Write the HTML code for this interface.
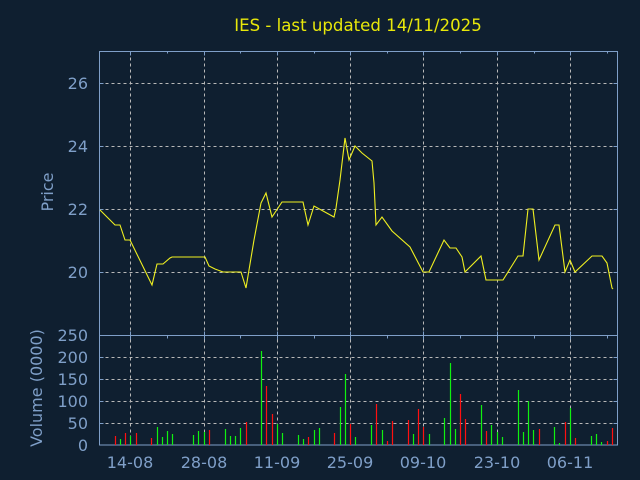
<!DOCTYPE html>
<html><head><style>
html,body{margin:0;padding:0;background:#0f1f30;}
svg{display:block;}
text{font-family:"DejaVu Sans","Liberation Sans",sans-serif;}
</style></head><body>
<svg width="640" height="480" viewBox="0 0 640 480" xmlns="http://www.w3.org/2000/svg">
<rect width="640" height="480" fill="#0f1f30"/>
<text x="358" y="31" fill="#e8e80a" font-size="16.6" text-anchor="middle">IES - last updated 14/11/2025</text>
<g stroke="#b8b8b8" stroke-width="1" stroke-dasharray="3,3" fill="none">
<path d="M99.5 83.5H617.5M99.5 146.5H617.5M99.5 209.5H617.5M99.5 272.5H617.5"/>
<path d="M99.5 357.5H617.5M99.5 379.5H617.5M99.5 401.5H617.5M99.5 423.5H617.5"/>
<path d="M130.5 51.5V445M204.5 51.5V445M277.5 51.5V445M350.5 51.5V445M423.5 51.5V445M497.5 51.5V445M570.5 51.5V445"/>
</g>
<g stroke="#7f9fc8" stroke-width="1" fill="none">
<rect x="99.5" y="51.5" width="518" height="393.5"/>
<path d="M99.5 335.5H617.5"/>
<path d="M130.5 51.5v4M204.5 51.5v4M277.5 51.5v4M350.5 51.5v4M423.5 51.5v4M497.5 51.5v4M570.5 51.5v4"/>
<path d="M167.5 51.5v2M240.5 51.5v2M314.5 51.5v2M387.5 51.5v2M460.5 51.5v2M534.5 51.5v2M607.5 51.5v2"/>
<path d="M130.5 335.5v-4M204.5 335.5v-4M277.5 335.5v-4M350.5 335.5v-4M423.5 335.5v-4M497.5 335.5v-4M570.5 335.5v-4M130.5 335.5v4M204.5 335.5v4M277.5 335.5v4M350.5 335.5v4M423.5 335.5v4M497.5 335.5v4M570.5 335.5v4"/>
<path d="M167.5 335.5v3M240.5 335.5v3M314.5 335.5v3M387.5 335.5v3M460.5 335.5v3M534.5 335.5v3M607.5 335.5v3"/>
<path d="M99.5 83.5h4M99.5 146.5h4M99.5 209.5h4M99.5 272.5h4M617.5 83.5h-4M617.5 146.5h-4M617.5 209.5h-4M617.5 272.5h-4"/>
<path d="M99.5 357.5h4M99.5 379.5h4M99.5 401.5h4M99.5 423.5h4M617.5 357.5h-4M617.5 379.5h-4M617.5 401.5h-4M617.5 423.5h-4"/>
</g>
<g fill="#7f9fc8" font-size="16" text-anchor="end">
<text x="88" y="89">26</text><text x="88" y="152">24</text><text x="88" y="215">22</text><text x="88" y="278">20</text>
<text x="88" y="341">250</text><text x="88" y="363">200</text><text x="88" y="385">150</text><text x="88" y="407">100</text><text x="88" y="429">50</text><text x="88" y="451">0</text>
</g>
<g fill="#7f9fc8" font-size="16" text-anchor="middle">
<text x="130" y="468">14-08</text><text x="204" y="468">28-08</text><text x="277" y="468">11-09</text><text x="350" y="468">25-09</text><text x="423" y="468">09-10</text><text x="497" y="468">23-10</text><text x="570" y="468">06-11</text>
</g>
<text transform="translate(53,192) rotate(-90)" fill="#7f9fc8" font-size="16" text-anchor="middle">Price</text>
<text transform="translate(42,388) rotate(-90)" fill="#7f9fc8" font-size="16" text-anchor="middle">Volume (0000)</text>
<polyline fill="none" stroke="#f0f020" stroke-width="1.1" points="100,210 115,225 120,225 125,240 130,240 152,285 157,264 163,264 170,258 172,257 205,257 209,266 215,269 223,272 241,272 246,288 254,240 261,203 266,193 272,217 282,202 303,202 308,225 314,206 334,217 336,208 340,180 345,138 349,160 355,146 362,153 372,161 374,183 376,225 382,217 392,231 410,247 423,272 429,272 444,240 450,248 456,248 462,257 465,272 481,256 486,280 503,280 518,256 523,256 528,209 533,209 539,260 555,225 559,225 565,272 570,260 575,272 592,256 602,256 607,263 612,288 613,289"/>
<g stroke-width="1.2">
<g stroke="#ff1010">
<path d="M115.5 445V436M125.5 445V433M136.5 445V433M151.5 445V438M209.5 445V430M246.5 445V422M266.5 445V386M272.5 445V414M308.5 445V437M334.5 445V433M350.5 445V424M376.5 445V404M387.5 445V441M392.5 445V421M408.5 445V420M418.5 445V409M423.5 445V427M460.5 445V394M465.5 445V419M486.5 445V431M539.5 445V429M565.5 445V422M575.5 445V438M607.5 445V441M612.5 445V428"/>
</g>
<g stroke="#10f010">
<path d="M120.5 445V439M130.5 445V436M157.5 445V427M162.5 445V437M167.5 445V431M172.5 445V434M193.5 445V435M198.5 445V431M204.5 445V432M225.5 445V429M230.5 445V436M235.5 445V436M240.5 445V428M261.5 445V351M277.5 445V424M282.5 445V433M298.5 445V435M303.5 445V439M314.5 445V430M319.5 445V428M340.5 445V407M345.5 445V374M355.5 445V437M371.5 445V425M382.5 445V430M413.5 445V434M429.5 445V434M444.5 445V418M450.5 445V363M455.5 445V429M481.5 445V405M491.5 445V425M497.5 445V432M502.5 445V437M518.5 445V390M523.5 445V432M528.5 445V401M533.5 445V430M554.5 445V427M559.5 445V443M570.5 445V408M591.5 445V436M596.5 445V434M601.5 445V442"/>
</g>
</g>
</svg>
</body></html>
